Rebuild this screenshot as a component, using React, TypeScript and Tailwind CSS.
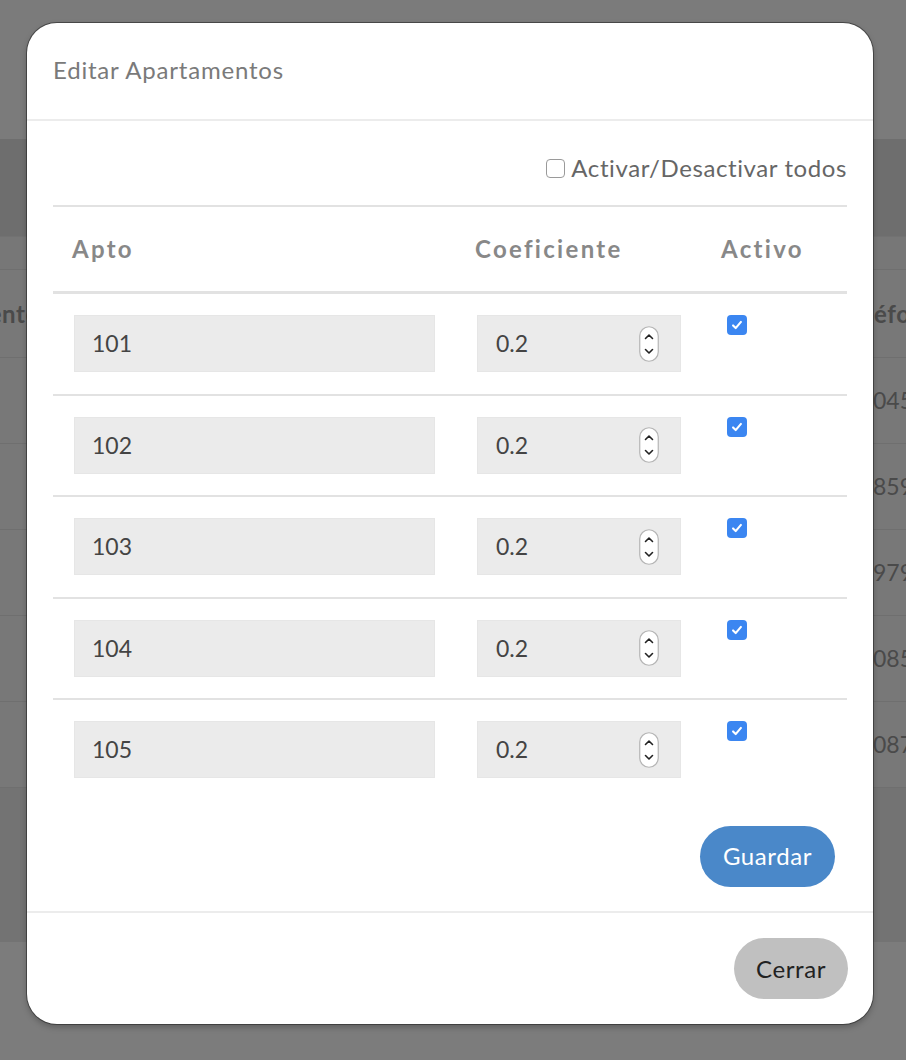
import React from "react";

const ROWS = ["101", "102", "103", "104", "105"];
const BG_ROWS = ["3100458712", "3128596021", "3009791254", "3110853367", "3150872290"];

function Check() {
  return (
    <span className="flex h-[20px] w-[20px] items-center justify-center rounded-[4px] bg-[#3b86f1]">
      <svg viewBox="0 0 16 16" className="h-[14px] w-[14px]" fill="none" stroke="white" strokeWidth={2.4} strokeLinecap="round" strokeLinejoin="round">
        <path d="M3.5 8.5l3 3 6-7" />
      </svg>
    </span>
  );
}

function Spinner() {
  return (
    <svg viewBox="0 0 20 36" className="h-[36px] w-[20px]" fill="none">
      <rect x="0.75" y="0.75" width="18.5" height="34.5" rx="9.25" fill="white" stroke="#b5b5b5" strokeWidth={1.2} />
      <path d="M6.5 12.5l3.5-3.5 3.5 3.5" stroke="#222" strokeWidth={1.6} strokeLinecap="round" strokeLinejoin="round" />
      <path d="M6.5 23.5l3.5 3.5 3.5-3.5" stroke="#222" strokeWidth={1.6} strokeLinecap="round" strokeLinejoin="round" />
    </svg>
  );
}

export default function App() {
  return (
    <div className="relative h-[1060px] w-[906px] overflow-hidden bg-[#7b7b7b] font-['Lato','Liberation_Sans',sans-serif]">
      {/* page behind the dimmed overlay */}
      <div className="flex flex-col">
        <div className="h-[139px] bg-[#7b7b7b]" />
        <div className="h-[97px] bg-[#6e6e6e]" />
        <div className="h-[33px] border-t border-[#727272] bg-[#777777]" />
        <div className="flex h-[88px] items-center border-t border-[#6f6f6f] bg-[#787878] text-[24px] font-bold tracking-[0.6px] text-[#4a4a4a]">
          <span className="ml-[-72px] w-[914px] shrink-0 whitespace-nowrap">Residente</span>
          <span className="shrink-0 whitespace-nowrap">Teléfono</span>
        </div>
        {BG_ROWS.map((n) => (
          <div key={n} className="flex h-[86px] items-center border-t border-[#6f6f6f] bg-[#787878] text-[23px] text-[#4a4a4a]">
            <span className="ml-[833px] shrink-0 whitespace-nowrap">{n}</span>
          </div>
        ))}
        <div className="h-[155px] border-t border-[#6f6f6f] bg-[#737373]" />
        <div className="h-[120px] bg-[#7c7c7c]" />
      </div>

      {/* modal */}
      <div className="absolute left-[27px] top-[23px] flex h-[1001px] w-[846px] flex-col rounded-[30px] bg-white shadow-[0_0_0_1px_rgba(40,40,40,0.6),0_3px_6px_rgba(0,0,0,0.25)]">
        <div className="flex h-[98px] items-center border-b-2 border-[#ececec] px-[26px] pb-[2px]">
          <h1 className="text-[24px] tracking-[0.8px] text-[#7a7a7a]">Editar Apartamentos</h1>
        </div>

        <div className="flex flex-1 flex-col px-[26px]">
          <label className="mt-[29px] flex items-center justify-end gap-[6px] text-[24px] tracking-[0.6px] text-[#666]">
            <span className="h-[19px] w-[19px] rounded-[4px] border border-[#9a9a9a] bg-white" />
            Activar/Desactivar todos
          </label>

          <div className="mt-[19px] border-t-2 border-[#e2e2e2]">
            <div className="grid h-[87px] grid-cols-[402px_248px_144px] items-center border-b-[3px] border-[#e2e2e2] text-[24px] font-bold tracking-[2.3px] text-[#888]">
              <span className="pl-[19px]">Apto</span>
              <span className="pl-[20px]">Coeficiente</span>
              <span className="pl-[18px]">Activo</span>
            </div>
            {ROWS.map((r, i) => (
              <div
                key={r}
                className={
                  "grid h-[101.5px] grid-cols-[402px_248px_144px] items-start pt-[21px] " +
                  (i < ROWS.length - 1 ? "border-b-2 border-[#e2e2e2]" : "")
                }
              >
                <div className="pl-[21px] pr-[20px]">
                  <div className="flex h-[57px] items-center border border-[#e6e6e6] bg-[#ebebeb] pl-[17px] text-[23px] text-[#444]">
                    {r}
                  </div>
                </div>
                <div className="pl-[22px] pr-[22px]">
                  <div className="flex h-[57px] items-center justify-between border border-[#e6e6e6] bg-[#ebebeb] pl-[18px] pr-[21px] text-[23px] text-[#444]">
                    <span>0.2</span>
                    <Spinner />
                  </div>
                </div>
                <div className="pl-[24px]">
                  <Check />
                </div>
              </div>
            ))}
          </div>

          <div className="mt-[24px] flex justify-end pr-[12px]">
            <button className="h-[61px] w-[135px] rounded-full bg-[#4a88c9] text-[24px] tracking-[0.6px] text-white">Guardar</button>
          </div>
        </div>

        <div className="flex h-[113px] items-start justify-end border-t-2 border-[#ececec] pr-[25px] pt-[25px]">
          <button className="h-[61px] w-[114px] rounded-full bg-[#c0c0c0] text-[24px] tracking-[0.6px] text-[#222]">Cerrar</button>
        </div>
      </div>
    </div>
  );
}
